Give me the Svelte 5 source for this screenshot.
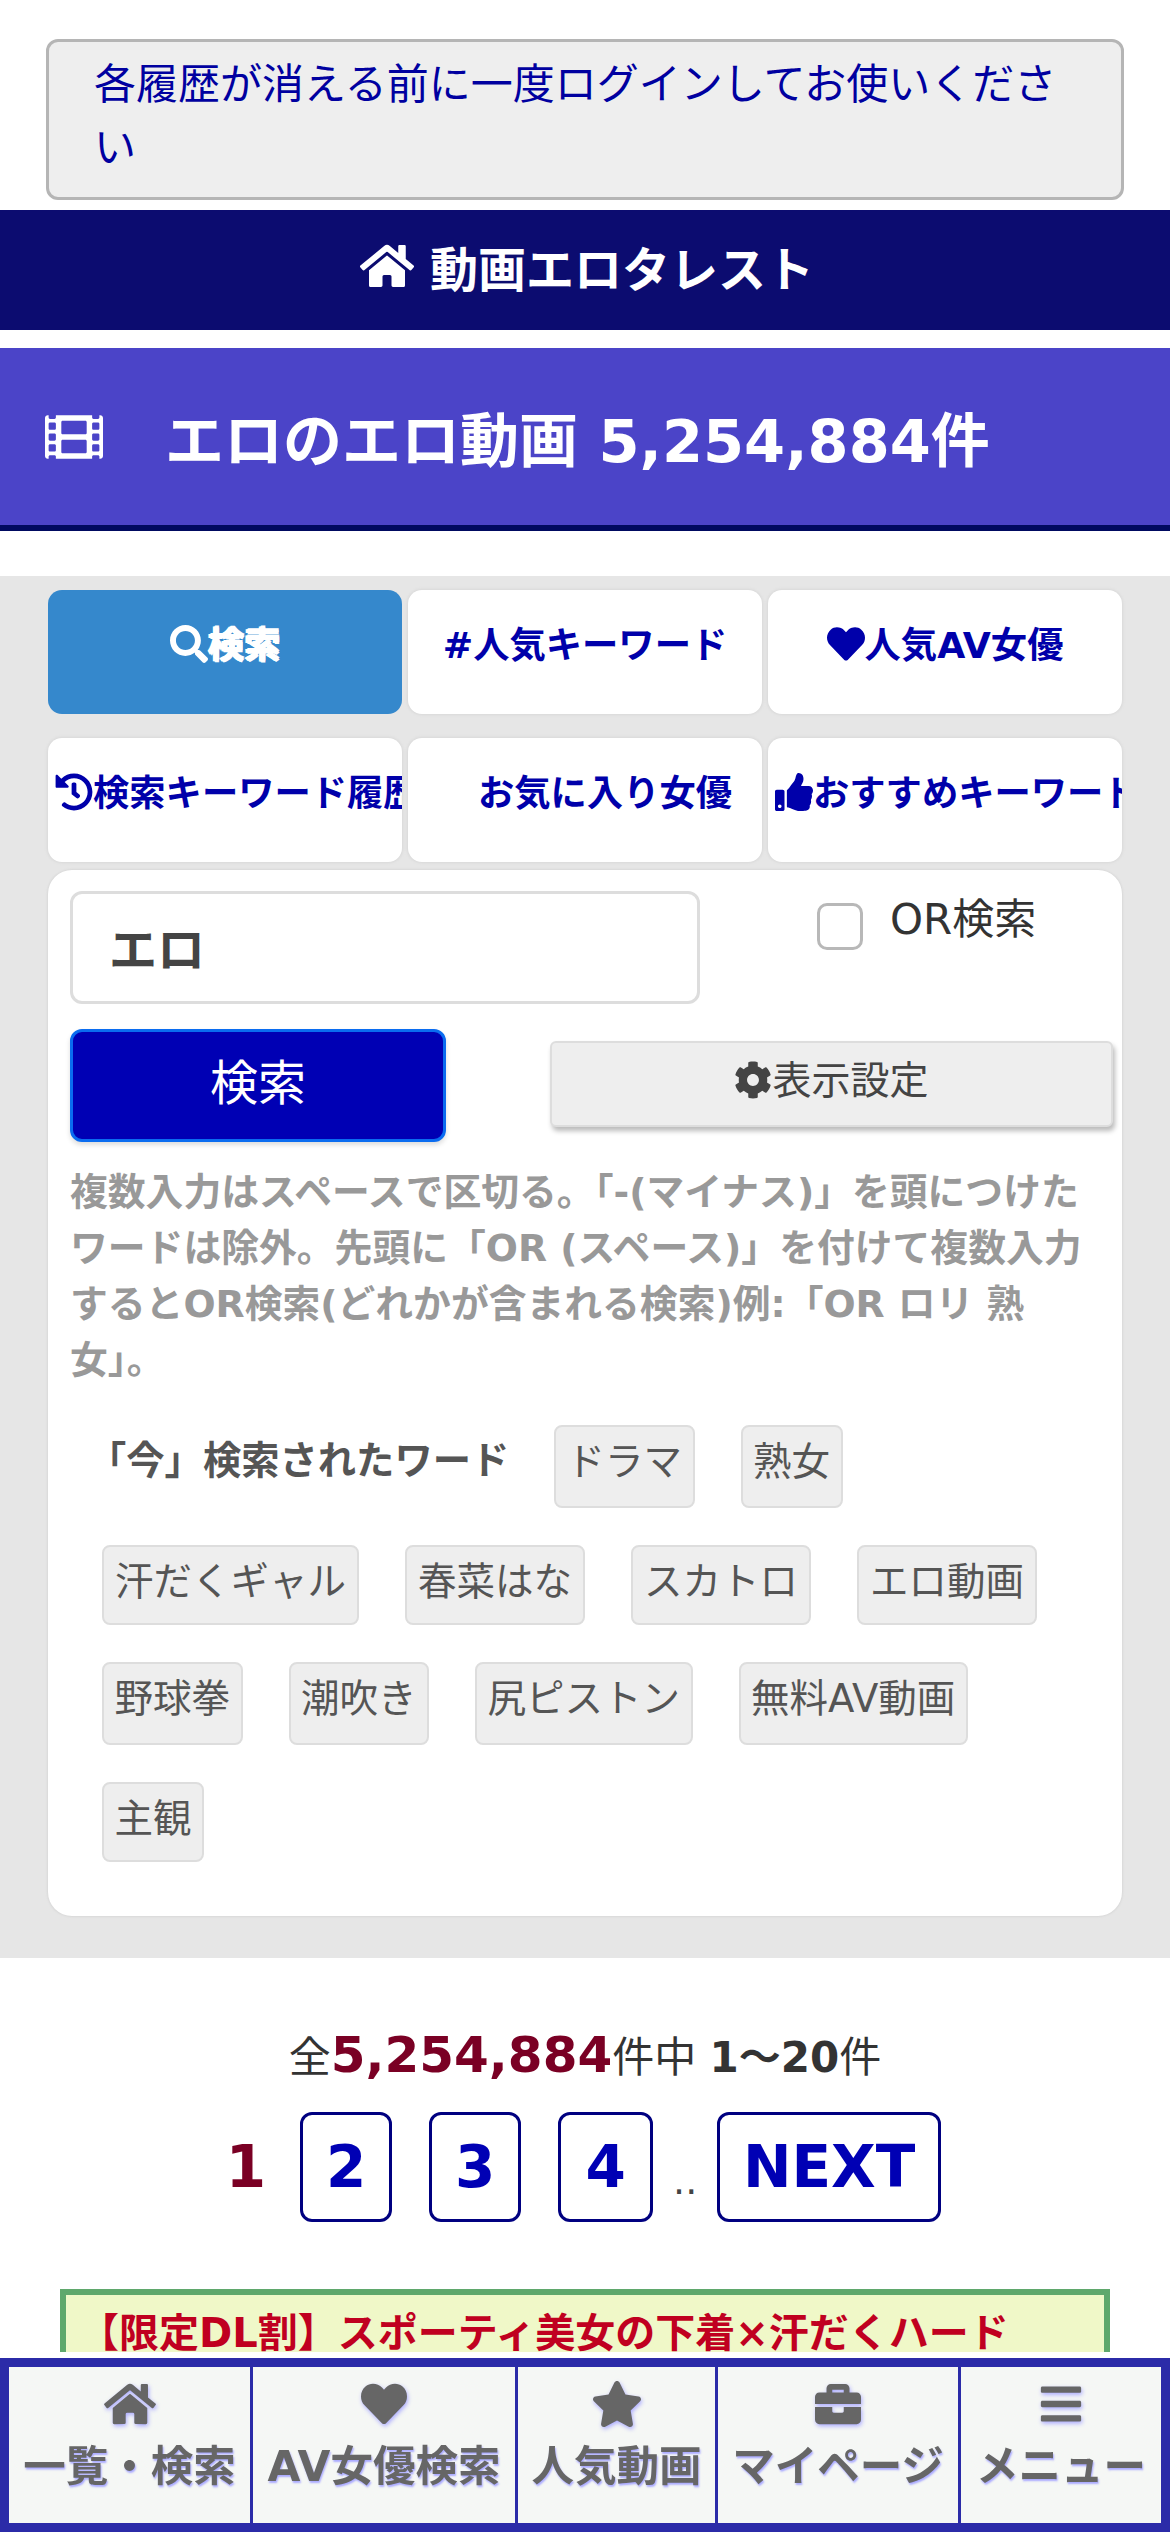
<script>
  const P = {
    home: ['0 0 576 512', 'M280.37 148.26L96 300.11V464a16 16 0 0 0 16 16l112.06-.29a16 16 0 0 0 15.92-16V368a16 16 0 0 1 16-16h64a16 16 0 0 1 16 16v95.64a16 16 0 0 0 16 16.05L464 480a16 16 0 0 0 16-16V300L295.67 148.26a12.19 12.19 0 0 0-15.3 0zM571.6 251.47L488 182.56V44.05a12 12 0 0 0-12-12h-56a12 12 0 0 0-12 12v72.61L318.47 43a48 48 0 0 0-61 0L4.34 251.47a12 12 0 0 0-1.6 16.9l25.5 31A12 12 0 0 0 45.15 301l235.22-193.74a12.19 12.19 0 0 1 15.3 0L530.9 301a12 12 0 0 0 16.9-1.6l25.5-31a12 12 0 0 0-1.7-16.93z'],
    heart: ['0 0 512 512', 'M462.3 62.6C407.5 15.9 326 24.3 275.7 76.2L256 96.5l-19.7-20.3C186.1 24.3 104.5 15.9 49.7 62.6c-62.8 53.6-66.1 149.8-9.9 207.9l193.5 199.8c12.5 12.9 32.8 12.9 45.3 0l193.5-199.8c56.3-58.1 53-154.3-9.8-207.9z'],
    star: ['0 0 576 512', 'M259.3 17.8L194 150.2 47.9 171.5c-26.2 3.8-36.7 36.1-17.7 54.6l105.7 103-25 145.5c-4.5 26.3 23.2 46 46.4 33.7L288 439.6l130.7 68.7c23.2 12.2 50.9-7.4 46.4-33.7l-25-145.5 105.7-103c19-18.5 8.5-50.8-17.7-54.6L382 150.2 316.7 17.8c-11.7-23.6-45.6-23.9-57.4 0z'],
    briefcase: ['0 0 512 512', 'M320 336c0 8.84-7.16 16-16 16h-96c-8.84 0-16-7.16-16-16v-48H0v144c0 25.6 22.4 48 48 48h416c25.6 0 48-22.4 48-48V288H320v48zm144-208h-80V80c0-25.6-22.4-48-48-48H176c-25.6 0-48 22.4-48 48v48H48c-25.6 0-48 22.4-48 48v80h512v-80c0-25.6-22.4-48-48-48zm-144 0H192V96h128v32z'],
    bars: ['0 0 448 512', 'M16 132h416c8.837 0 16-7.163 16-16V76c0-8.837-7.163-16-16-16H16C7.163 60 0 67.163 0 76v40c0 8.837 7.163 16 16 16zm0 160h416c8.837 0 16-7.163 16-16v-40c0-8.837-7.163-16-16-16H16c-8.837 0-16 7.163-16 16v40c0 8.837 7.163 16 16 16zm0 160h416c8.837 0 16-7.163 16-16v-40c0-8.837-7.163-16-16-16H16c-8.837 0-16 7.163-16 16v40c0 8.837 7.163 16 16 16z'],
    search: ['0 0 512 512', 'M505 442.7L405.3 343c-4.5-4.5-10.6-7-17-7H372c27.6-35.3 44-79.7 44-128C416 93.1 322.9 0 208 0S0 93.1 0 208s93.1 208 208 208c48.3 0 92.7-16.4 128-44v16.3c0 6.4 2.5 12.5 7 17l99.7 99.7c9.4 9.4 24.6 9.4 33.9 0l28.3-28.3c9.4-9.4 9.4-24.6.1-34zM208 336c-70.7 0-128-57.2-128-128 0-70.7 57.2-128 128-128 70.7 0 128 57.2 128 128 0 70.7-57.2 128-128 128z'],
    history: ['0 0 512 512', 'M504 255.531c.253 136.64-111.18 248.372-247.82 248.468-59.015.042-113.223-20.53-155.822-54.911-11.077-8.94-11.905-25.541-1.839-35.607l11.267-11.267c8.609-8.609 22.353-9.551 31.891-1.984C173.062 425.135 212.781 440 256 440c101.705 0 184-82.311 184-184 0-101.705-82.311-184-184-184-48.814 0-93.149 18.969-126.068 49.932l50.754 50.754c10.08 10.08 2.941 27.314-11.313 27.314H24c-8.837 0-16-7.163-16-16V38.627c0-14.254 17.234-21.393 27.314-11.314l49.372 49.372C129.209 34.136 189.552 8 256 8c136.81 0 247.747 110.78 248 247.531zm-180.912 78.784l9.823-12.63c8.138-10.463 6.253-25.542-4.21-33.679L288 256.349V152c0-13.255-10.745-24-24-24h-16c-13.255 0-24 10.745-24 24v135.651l65.409 50.874c10.463 8.137 25.541 6.253 33.679-4.21z'],
    thumbs: ['0 0 512 512', 'M104 224H24c-13.255 0-24 10.745-24 24v240c0 13.255 10.745 24 24 24h80c13.255 0 24-10.745 24-24V248c0-13.255-10.745-24-24-24zM64 472c-13.255 0-24-10.745-24-24s10.745-24 24-24 24 10.745 24 24-10.745 24-24 24zM384 81.452c0 42.416-25.97 66.208-33.277 94.548h101.723c33.397 0 59.397 27.746 59.553 58.098.084 17.938-7.546 37.249-19.439 49.197l-.11.11c9.836 23.337 8.237 56.037-9.308 79.469 8.681 25.895-.069 57.704-16.382 74.757 4.298 17.598 2.244 32.575-6.148 44.632C440.202 511.587 389.616 512 346.839 512l-2.845-.001c-48.287-.017-87.806-17.598-119.56-31.725-15.957-7.099-36.821-15.887-52.651-16.178-6.54-.12-11.783-5.457-11.783-11.998v-213.77c0-3.2 1.282-6.271 3.558-8.521 39.614-39.144 56.648-80.587 89.117-113.111 14.804-14.832 20.188-37.236 25.393-58.902C282.515 39.293 291.817 0 312 0c24 0 72 8 72 81.452z'],
    cog: ['0 0 512 512', 'M487.4 315.7l-42.6-24.6c4.3-23.2 4.3-47 0-70.2l42.6-24.6c4.9-2.8 7.1-8.6 5.5-14-11.1-35.6-30-67.8-54.7-94.6-3.8-4.1-10-5.1-14.8-2.3L380.8 110c-17.9-15.4-38.5-27.3-60.8-35.1V25.8c0-5.6-3.9-10.5-9.4-11.7-36.7-8.2-74.3-7.8-109.2 0-5.5 1.2-9.4 6.1-9.4 11.7V75c-22.2 7.9-42.8 19.8-60.8 35.1L88.7 85.5c-4.9-2.8-11-1.9-14.8 2.3-24.7 26.7-43.6 58.9-54.7 94.6-1.7 5.4.6 11.2 5.5 14L67.3 221c-4.3 23.2-4.3 47 0 70.2l-42.6 24.6c-4.9 2.8-7.1 8.6-5.5 14 11.1 35.6 30 67.8 54.7 94.6 3.8 4.1 10 5.1 14.8 2.3l42.6-24.6c17.9 15.4 38.5 27.3 60.8 35.1v49.2c0 5.6 3.9 10.5 9.4 11.7 36.7 8.2 74.3 7.8 109.2 0 5.5-1.2 9.4-6.1 9.4-11.7v-49.2c22.2-7.9 42.8-19.8 60.8-35.1l42.6 24.6c4.9 2.8 11 1.9 14.8-2.3 24.7-26.7 43.6-58.9 54.7-94.6 1.5-5.5-.7-11.3-5.6-14.1zM256 336c-44.1 0-80-35.9-80-80s35.9-80 80-80 80 35.9 80 80-35.9 80-80 80z'],
    film: ['0 0 512 512', 'M488 64h-8v20c0 6.6-5.4 12-12 12h-40c-6.6 0-12-5.4-12-12V64H96v20c0 6.6-5.4 12-12 12H44c-6.6 0-12-5.4-12-12V64h-8C10.7 64 0 74.7 0 88v336c0 13.3 10.7 24 24 24h8v-20c0-6.6 5.4-12 12-12h40c6.6 0 12 5.4 12 12v20h320v-20c0-6.6 5.4-12 12-12h40c6.6 0 12 5.4 12 12v20h8c13.3 0 24-10.7 24-24V88c0-13.3-10.7-24-24-24zM96 372c0 6.6-5.4 12-12 12H44c-6.6 0-12-5.4-12-12v-40c0-6.6 5.4-12 12-12h40c6.6 0 12 5.4 12 12v40zm0-96c0 6.6-5.4 12-12 12H44c-6.6 0-12-5.4-12-12v-40c0-6.6 5.4-12 12-12h40c6.6 0 12 5.4 12 12v40zm0-96c0 6.6-5.4 12-12 12H44c-6.6 0-12-5.4-12-12v-40c0-6.6 5.4-12 12-12h40c6.6 0 12 5.4 12 12v40zm272 208c0 6.6-5.4 12-12 12H156c-6.6 0-12-5.4-12-12v-96c0-6.6 5.4-12 12-12h200c6.6 0 12 5.4 12 12v96zm0-168c0 6.6-5.4 12-12 12H156c-6.6 0-12-5.4-12-12v-96c0-6.6 5.4-12 12-12h200c6.6 0 12 5.4 12 12v96zm112 152c0 6.6-5.4 12-12 12h-40c-6.6 0-12-5.4-12-12v-40c0-6.6 5.4-12 12-12h40c6.6 0 12 5.4 12 12v40zm0-96c0 6.6-5.4 12-12 12h-40c-6.6 0-12-5.4-12-12v-40c0-6.6 5.4-12 12-12h40c6.6 0 12 5.4 12 12v40zm0-96c0 6.6-5.4 12-12 12h-40c-6.6 0-12-5.4-12-12v-40c0-6.6 5.4-12 12-12h40c6.6 0 12 5.4 12 12v40z']
  };
  const tabs = [
    { icon: 'search', label: '検索', active: true },
    { text: '#人気キーワード' },
    { icon: 'heart', label: '人気AV女優' },
    { icon: 'history', label: '検索キーワード履歴' },
    { spacer: true, label: 'お気に入り女優' },
    { icon: 'thumbs', label: 'おすすめキーワード' }
  ];
  const tagRows = [
    ['汗だくギャル', '春菜はな', 'スカトロ', 'エロ動画'],
    ['野球拳', '潮吹き', '尻ピストン', '無料AV動画'],
    ['主観']
  ];
  const nav = [
    { icon: 'home', label: '一覧・検索', w: 241 },
    { icon: 'heart', label: 'AV女優検索', w: 262 },
    { icon: 'star', label: '人気動画', w: 197 },
    { icon: 'briefcase', label: 'マイページ', w: 240 },
    { icon: 'bars', label: 'メニュー', w: 200 }
  ];
</script>

{#snippet icon(name, cls)}
  <svg class={cls} viewBox={P[name][0]} aria-hidden="true"><path d={P[name][1]} fill="currentColor" /></svg>
{/snippet}

<div class="page">
  <div class="alert">各履歴が消える前に一度ログインしてお使いください</div>

  <h1 class="site">{@render icon('home', 'site-ic')}<span>動画エロタレスト</span></h1>

  <h2 class="title">{@render icon('film', 'film-ic')}<span>エロのエロ動画 5,254,884件</span></h2>

  <section class="search">
    <div class="tabs">
      {#each tabs as t}
        <div class="tab" class:active={t.active}>
          {#if t.icon}{@render icon(t.icon, 'tab-ic')}{/if}{#if t.spacer}<span class="spacer"></span>{/if}{t.label ?? t.text}
        </div>
      {/each}
    </div>

    <div class="panel">
      <div class="row-input">
        <div class="input">エロ</div>
        <label class="or"><span class="check"></span><span class="or-text">OR検索</span></label>
      </div>
      <div class="row-btn">
        <div class="go">検索</div>
        <div class="settings">{@render icon('cog', 'cog-ic')}表示設定</div>
      </div>
      <p class="help">複数入力はスペースで区切る。「-(マイナス)」を頭につけたワードは除外。先頭に「OR (スペース)」を付けて複数入力するとOR検索(どれかが含まれる検索)例:「OR ロリ 熟女」。</p>

      <div class="words">
        <div class="word-row">
          <b class="now">「今」検索されたワード</b>
          <span class="tag t83">ドラマ</span>
          <span class="tag t83">熟女</span>
        </div>
        <div class="word-row">
          {#each tagRows[0] as w}<span class="tag t80 wide">{w}</span>{/each}
        </div>
        <div class="word-row">
          {#each tagRows[1] as w}<span class="tag t83">{w}</span>{/each}
        </div>
        <div class="word-row">
          {#each tagRows[2] as w}<span class="tag t80">{w}</span>{/each}
        </div>
      </div>
    </div>
  </section>

  <div class="count">全<b class="num">5,254,884</b>件中 <b>1〜20</b>件</div>

  <div class="pager">
    <b class="cur">1</b>
    <a class="pg p2">2</a>
    <a class="pg p3">3</a>
    <a class="pg p4">4</a>
    <span class="dots">..</span>
    <a class="pg next">NEXT</a>
  </div>

  <div class="promo">【限定DL割】スポーティ美女の下着×汗だくハード</div>
</div>

<nav class="bottom">
  {#each nav as n}
    <div class="cell" style="width:{n.w}px">
      {@render icon(n.icon, 'nav-ic')}
      <span>{n.label}</span>
    </div>
  {/each}
</nav>

<style>
  :global(body) {
    margin: 0;
    background: #fff;
    font-family: "DejaVu Sans", "Noto Sans CJK JP", sans-serif;
    color: #333;
  }
  .page {
    height: 2532px;
    overflow: hidden;
    box-sizing: border-box;
    padding-top: 39px;
  }
  .alert {
    box-sizing: border-box;
    height: 161px;
    margin: 0 46px;
    padding: 11px 45px 0;
    background: #eee;
    border: 3px solid #b5b5b5;
    border-radius: 12px;
    color: #0000a0;
    font-size: 42px;
    line-height: 63px;
    overflow-wrap: anywhere;
  }
  .site {
    margin: 10px 0 0;
    height: 120px;
    box-sizing: border-box;
    padding: 0 0 9px 4px;
    background: #0c0c70;
    color: #fff;
    font-size: 48px;
    font-weight: bold;
    display: flex;
    align-items: center;
    justify-content: center;
    gap: 16px;
  }
  :global(.site-ic) {
    width: 54px;
    height: 48px;
  }
  .title {
    margin: 18px 0 0;
    height: 183px;
    box-sizing: border-box;
    background: #4b44c8;
    border-bottom: 6px solid #000a60;
    color: #fff;
    font-size: 59px;
    font-weight: bold;
    display: flex;
    align-items: center;
    padding-left: 45px;
    gap: 62px;
  }
  :global(.film-ic) {
    width: 58px;
    height: 58px;
    flex: none;
  }
  .search {
    margin-top: 45px;
    background: #e6e6e6;
    padding: 14px 48px 42px;
  }
  .tabs {
    display: grid;
    grid-template-columns: repeat(3, 354px);
    column-gap: 6px;
    row-gap: 24px;
  }
  .tab {
    box-sizing: border-box;
    height: 124px;
    background: #fff;
    border-radius: 14px;
    box-shadow: 0 0 3px 1px #d8d8d8;
    color: #0000aa;
    font-size: 36.3px;
    font-weight: bold;
    text-align: center;
    padding: 27px 7px 0;
    line-height: 58px;
    white-space: nowrap;
    overflow: hidden;
  }
  .tab.active {
    background: #3588cc;
    color: #fff;
    text-shadow: 1px 1px 0 #fff, -1px 0 0 #fff, 1px -1px 0 #fff;
    box-shadow: none;
  }
  :global(.tab-ic) {
    width: 38px;
    height: 38px;
    vertical-align: -5px;
  }
  .spacer {
    display: inline-block;
    width: 40px;
  }
  .panel {
    margin-top: 8px;
    background: #fff;
    border-radius: 24px;
    box-shadow: 0 0 2px 1px #d8d8d8;
    padding: 21px 6px 54px 22px;
  }
  .row-input {
    display: flex;
    height: 113px;
  }
  .input {
    flex: none;
    box-sizing: border-box;
    width: 630px;
    height: 113px;
    border: 3px solid #ddd;
    border-radius: 12px;
    font-size: 48px;
    font-weight: bold;
    color: #444;
    padding: 0 36px;
    line-height: 113px;
  }
  .or {
    display: flex;
    margin-left: 117px;
    font-size: 42px;
    color: #333;
  }
  .check {
    box-sizing: border-box;
    width: 46px;
    height: 47px;
    margin-top: 12px;
    border: 3px solid #b8b8b8;
    border-radius: 10px;
  }
  .or-text {
    margin-left: 27px;
    line-height: 57px;
  }
  .row-btn {
    display: flex;
    align-items: center;
    margin-top: 25px;
    height: 113px;
  }
  .go {
    flex: none;
    box-sizing: border-box;
    width: 376px;
    height: 113px;
    background: #0000b4;
    border: 3px solid #0a6cf0;
    border-radius: 12px;
    color: #fff;
    font-size: 48px;
    text-align: center;
    line-height: 103px;
    box-shadow: 0 3px 5px #ddd;
  }
  .settings {
    flex: none;
    box-sizing: border-box;
    width: 563px;
    height: 86px;
    margin: -3px 0 0 104px;
    background: #eee;
    border: 2px solid #ddd;
    border-radius: 6px;
    box-shadow: 2px 4px 5px #bbb;
    color: #444;
    font-size: 39px;
    text-align: center;
    line-height: 76px;
  }
  :global(.cog-ic) {
    width: 38px;
    height: 38px;
    vertical-align: -5px;
  }
  .help {
    margin: 22px 0 0;
    width: 1020px;
    color: #999;
    font-size: 37.8px;
    font-weight: bold;
    line-height: 56px;
    overflow-wrap: anywhere;
  }
  .words {
    margin-top: 37px;
    padding-left: 32px;
    display: flex;
    flex-direction: column;
    gap: 37px;
  }
  .word-row {
    display: flex;
    align-items: flex-start;
    gap: 46px;
  }
  .now {
    width: 420px;
    margin-left: -14px;
    font-size: 38.3px;
    color: #555;
    line-height: 72px;
    white-space: nowrap;
  }
  .tag {
    box-sizing: border-box;
    padding: 0 10.5px;
    background: #eee;
    border: 2px solid #ddd;
    border-radius: 8px;
    color: #555;
    font-size: 38.5px;
    white-space: nowrap;
    line-height: 68px;
  }
  .tag.wide { padding: 0 11px; }
  .t83 { height: 83px; line-height: 70px; }
  .t80 { height: 80px; line-height: 69px; }
  .count {
    margin-top: 62px;
    text-align: center;
    font-size: 42px;
    line-height: 70px;
    color: #333;
  }
  .count b { color: #333; }
  .count .num {
    color: #7a0024;
    font-size: 50px;
  }
  .pager {
    margin-top: 19px;
    display: flex;
    justify-content: center;
    align-items: center;
    height: 110px;
    padding-right: 3px;
    font-size: 58px;
    font-weight: bold;
  }
  .cur {
    color: #7a0024;
    margin-right: 34px;
  }
  .pg {
    box-sizing: border-box;
    height: 110px;
    line-height: 104px;
    border: 3px solid #000080;
    border-radius: 12px;
    color: #0000b4;
    text-align: center;
  }
  .p2, .p3 { width: 92px; margin-right: 37px; }
  .p4 { width: 95px; }
  .next { width: 224px; }
  .dots {
    width: 64px;
    font-size: 38px;
    font-weight: normal;
    color: #444;
    text-align: center;
    align-self: flex-end;
    line-height: 82px;
  }
  .promo {
    margin: 67px 60px 0;
    box-sizing: border-box;
    height: 260px;
    background: #f0f8c8;
    border: 6px solid #5fa86c;
    color: #c00020;
    font-size: 40px;
    font-weight: bold;
    padding: 8px 13px;
    line-height: 60px;
    white-space: nowrap;
  }
  .bottom {
    position: fixed;
    left: 0;
    right: 0;
    bottom: 0;
    box-sizing: border-box;
    height: 174px;
    display: flex;
    gap: 3px;
    padding: 9px 12px 9px 9px;
    background: #2b2ba8;
    box-shadow: 0 -6px 0 #fff;
  }
  .cell {
    flex: none;
    background: #f5f7f5;
    color: #666;
    font-size: 42.5px;
    font-weight: bold;
    text-align: center;
    white-space: nowrap;
    text-shadow: 1px 2px 2px #aaf;
    display: flex;
    flex-direction: column;
    align-items: center;
  }
  :global(.nav-ic) {
    width: 52px;
    height: 46px;
    margin-top: 14px;
    filter: drop-shadow(1px 2px 2px #aaf);
  }
  .cell span {
    margin-top: 9px;
    line-height: 62px;
  }
</style>
